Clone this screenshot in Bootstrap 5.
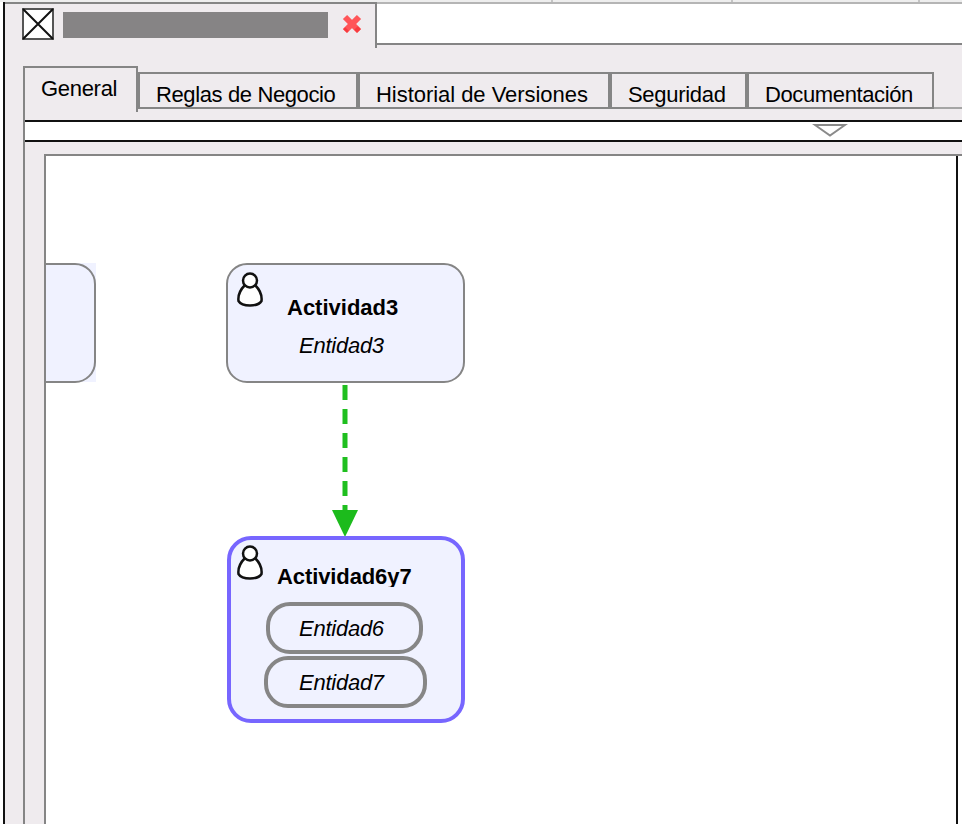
<!DOCTYPE html>
<html lang="es">
<head>
<meta charset="utf-8">
<meta name="viewport" content="width=device-width, initial-scale=1">
<title>Editor de procesos</title>
<link href="https://cdn.jsdelivr.net/npm/bootstrap@5.3.0/dist/css/bootstrap.min.css" rel="stylesheet">
<style>
body{font-family:"Liberation Sans",Arial,sans-serif;font-size:22px;line-height:26px;color:#000;background:#fff}
.app{height:824px}
.strip{height:2px;background:#eee}
.strip i{border-right:2px solid #c4c4c4}
.strip i:nth-child(1){width:553px}.strip i:nth-child(2){width:180px}.strip i:nth-child(3){width:187px}
.frame{margin-left:3px;border-left:2px solid #111;background:#efebee;min-height:0}
.editor-tabs{height:44px}
.editor-tab{width:372px;height:46px;border-top:2px solid #858585;border-right:2px solid #858585;background:#efebee;padding-left:17px}
.editor-rest{height:43px;border-top:2px solid #b5b5b5;border-bottom:2px solid #858585;background:#fff}
.box-icon{margin-top:4px}
.title-bar{width:265px;height:26px;background:#868485;margin:8px 0 0 9px}
.close-icon{margin:10px 0 0 14px}
.tabs{margin:20px 0 0 18px;height:46px}
.page-tab{border:2px solid #858585;margin-top:6px;height:37px;padding:8px 0 0 16px}
.page-tab span,.page-tab-on span{display:block;white-space:nowrap;letter-spacing:-.3px}
.page-tab-on{width:115px;height:46px;border:2px solid #858585;border-bottom:0;padding:8px 0 0 16px}
.tab-rules{width:220px}.tab-history{width:252px}.tab-security{width:137px}.tab-docs{width:187px}
.tab-rules span,.tab-docs span{letter-spacing:-.38px}
.tab-history span{letter-spacing:-.04px}
.tab-fill{margin-top:41px;height:2px;background:#a5a5a5}
.pane{margin-left:18px;border-left:2px solid #858585;min-height:0}
.collapse-bar{height:22px;margin-top:8px;border-top:2px solid #111;border-bottom:2px solid #111;background:#fff}
.collapse-bar svg{margin-right:114px}
.canvas-wrap{margin:12px 0 0 19px;border-top:2px solid #858585;border-left:2px solid #858585;background:#fff;min-height:0}
.canvas{width:912px;border-right:2px solid #111}
.node{background:#f0f2ff;border:2px solid #858585;border-radius:21px}
.n-left-bg{left:0;top:107px;width:50px;height:119px;background:#f0f2ff}
.n-left{left:-60px;top:107px;width:110px;height:120px}
.n-3{left:180px;top:107px;width:239px;height:120px}
.n-67{left:181px;top:380px;width:238px;height:187px;border:4px solid #7766ff;border-radius:24px}
.edge{left:285px;top:228px}
.who{left:9px;top:7px}
.n-67 .who{left:6px;top:5px}
.node-name{font-weight:700;white-space:nowrap}
.n-3 .node-name{margin:30px 0 0 59px}
.n-67 .node-name{margin:24px 0 0 46px;height:23px;overflow:hidden;letter-spacing:-.1px}
.entity{font-style:italic;white-space:nowrap;letter-spacing:-.25px}
.n-3 .entity{margin:12px 0 0 71px}
.n-67 .pill{border:4px solid #868686;border-radius:24px;height:52px;padding-top:10px}
.p6{width:157px;margin:15px 0 0 35px;padding-left:29px}
.p7{width:163px;margin:2px 0 0 33px;padding-left:31px}
</style>
<script src="https://cdn.jsdelivr.net/npm/bootstrap@5.3.0/dist/js/bootstrap.bundle.min.js"></script>
</head>
<body class="overflow-hidden">
<div class="app d-flex flex-column">
  <div class="strip d-flex"><i></i><i></i><i></i></div>
  <div class="frame d-flex flex-column flex-grow-1">
    <div class="editor-tabs d-flex align-items-start flex-shrink-0">
      <div class="editor-tab d-flex flex-shrink-0 align-items-start">
        <svg class="box-icon" width="32" height="32" viewBox="0 0 32 32"><rect x="1" y="1" width="30" height="30" fill="#fff" stroke="#555" stroke-width="2"/><path d="M1 1 31 31M31 1 1 31" stroke="#111" stroke-width="2"/></svg>
        <div class="title-bar"></div>
        <svg class="close-icon" width="20" height="20" viewBox="0 0 20 20"><path d="M3 3 17 17" stroke="#ff5558" stroke-width="6"/><path d="M17 3 3 17" stroke="#ff5558" stroke-width="6"/><path d="m14 14 3 3M3 17l2-2" stroke="#f83b3f" stroke-width="5"/></svg>
      </div>
      <div class="editor-rest flex-grow-1"></div>
    </div>
    <div class="tabs d-flex flex-shrink-0" role="tablist">
      <div class="page-tab-on"><span>General</span></div>
      <div class="page-tab tab-rules"><span>Reglas de Negocio</span></div>
      <div class="page-tab tab-history"><span>Historial de Versiones</span></div>
      <div class="page-tab tab-security"><span>Seguridad</span></div>
      <div class="page-tab tab-docs"><span>Documentación</span></div>
      <div class="tab-fill flex-grow-1"></div>
    </div>
    <div class="pane d-flex flex-column flex-grow-1">
      <div class="collapse-bar flex-shrink-0 d-flex justify-content-end">
        <svg width="36" height="17" viewBox="0 0 36 17"><path d="M3 3h30L18 13.500Z" fill="#fff" stroke="#8a8a8a" stroke-width="2"/></svg>
      </div>
      <div class="canvas-wrap flex-grow-1 d-flex">
        <div class="canvas position-relative overflow-hidden">
          <div class="n-left-bg position-absolute"></div>
          <div class="node n-left position-absolute"></div>
          <div class="node n-3 position-absolute">
            <svg class="who position-absolute" width="26" height="36" viewBox="0 0 26 36"><path d="M8 13C2 19 1 25 1.500 29 5 35 21 35 24.500 29 25 25 24 19 18 13Z" fill="#fff" stroke="#111" stroke-width="2.500"/><circle cx="13" cy="8.500" r="7" fill="#fff" stroke="#111" stroke-width="2.500"/></svg>
            <div class="node-name"><span>Actividad3</span></div>
            <div class="entity"><span>Entidad3</span></div>
          </div>
          <svg class="edge position-absolute" width="28" height="153" viewBox="0 0 28 153"><path d="M14 1V130" stroke="#1fbf1f" stroke-width="5" stroke-dasharray="15 9"/><path d="M1 126h26L14 153Z" fill="#1cbb1c"/></svg>
          <div class="node n-67 position-absolute">
            <svg class="who position-absolute" width="26" height="36" viewBox="0 0 26 36"><path d="M8 13C2 19 1 25 1.500 29 5 35 21 35 24.500 29 25 25 24 19 18 13Z" fill="#fff" stroke="#111" stroke-width="2.500"/><circle cx="13" cy="8.500" r="7" fill="#fff" stroke="#111" stroke-width="2.500"/></svg>
            <div class="node-name"><span>Actividad6y7</span></div>
            <div class="entity pill p6"><span>Entidad6</span></div>
            <div class="entity pill p7"><span>Entidad7</span></div>
          </div>
        </div>
      </div>
    </div>
  </div>
</div>
</body>
</html>
